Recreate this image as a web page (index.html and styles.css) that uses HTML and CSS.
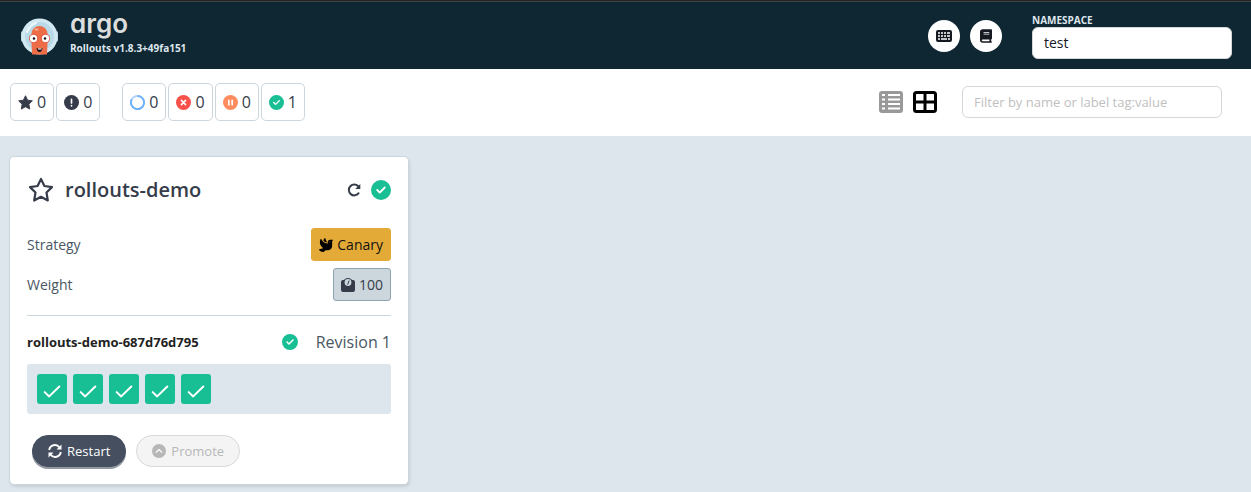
FILE: index.html
```html
<!DOCTYPE html>
<html lang="en">
<head>
    <meta charset="UTF-8">
    <meta name="viewport" content="width=device-width, initial-scale=1.0">
    <title>Argo Rollouts</title>
    <link rel="stylesheet" href="styles.css">
</head>
<body>
    <!-- Shared icons -->
    <svg class="sprite" aria-hidden="true">
        <symbol id="i-check" viewBox="0 0 512 512">
            <path d="M256 512A256 256 0 1 0 256 0a256 256 0 1 0 0 512zM369 209L241 337c-9.400 9.400-24.600 9.400-33.900 0l-64-64c-9.400-9.400-9.400-24.600 0-33.900s24.600-9.400 33.900 0l47 47L335 175c9.400-9.400 24.600-9.400 33.900 0s9.400 24.600 0 33.900z"/>
        </symbol>
        <symbol id="i-tick" viewBox="0 0 16 16">
            <path d="M1.500 9L5.500 12.800L14.500 4" fill="none" stroke="currentColor" stroke-width="1.800" stroke-linecap="round" stroke-linejoin="round"/>
        </symbol>
    </svg>

    <header class="header">
        <a href="#" class="brand">
            <svg class="brand-logo" viewBox="0 0 37 37" aria-hidden="true">
                <rect x="0" y="13" width="37" height="11" rx="2" fill="#b4d3e3"/>
                <circle cx="18.500" cy="18.500" r="18" fill="#d3e9f2"/>
                <circle cx="18.500" cy="18.500" r="14.500" fill="#b9dae8"/>
                <path d="M6 14Q9 7 15 5" fill="none" stroke="#eef8fc" stroke-width="2" stroke-linecap="round"/>
                <path d="M10.500 16a8 8 0 0 1 16 0v8c0 5-.5 8-.5 12.500H11c0-4.500-.5-7.500-.5-12.500z" fill="#ec6d47"/>
                <ellipse cx="15.500" cy="11.500" rx="2" ry="1.200" fill="#f7a78a"/>
                <circle cx="12.500" cy="20.500" r="4.500" fill="#e34e3b"/>
                <circle cx="24.500" cy="20.500" r="4.500" fill="#e34e3b"/>
                <circle cx="12.500" cy="20.500" r="3.700" fill="#fff"/>
                <circle cx="24.500" cy="20.500" r="3.700" fill="#fff"/>
                <circle cx="13" cy="20.500" r="1.200" fill="#111"/>
                <circle cx="24" cy="20.500" r="1.200" fill="#111"/>
                <path d="M15.500 30q3 1.500 6 0q-.5 4-3 4t-3-4z" fill="#1b1414"/>
                <path d="M17 30.500h3.500v1H17z" fill="#fff"/>
            </svg>
            <span class="brand-text">
                <span class="brand-name">argo</span>
                <span class="brand-version">Rollouts v1.8.3+49fa151</span>
            </span>
        </a>
        <div class="header-right">
            <button type="button" class="round-btn" aria-label="Keyboard shortcuts">
                <svg width="16" height="12" viewBox="0 0 16 12">
                    <rect width="16" height="12" rx="2" fill="#16191f"/>
                    <path d="M2 3h2M5 3h2M8 3h2M11 3h3M2 6h2M5 6h2M8 6h2M11 6h3M2 9h2M5 9h6M12 9h2" stroke="#fff" stroke-width="1.400"/>
                </svg>
            </button>
            <button type="button" class="round-btn" aria-label="Documentation">
                <svg width="12" height="14" viewBox="0 0 448 512">
                    <path fill="#16191f" d="M96 0C43 0 0 43 0 96V416c0 53 43 96 96 96H416c18 0 32-14 32-32s-14-32-32-32V384c18 0 32-14 32-32V32c0-18-14-32-32-32H96zm0 384H352v64H96c-18 0-32-14-32-32s14-32 32-32zm32-264c0-9 7-16 16-16H336c9 0 16 7 16 16s-7 16-16 16H144c-9 0-16-7-16-16zm16 48H336c9 0 16 7 16 16s-7 16-16 16H144c-9 0-16-7-16-16s7-16 16-16z"/>
                </svg>
            </button>
            <div class="namespace">
                <label for="namespace">NAMESPACE</label>
                <input type="text" id="namespace" class="text-input" value="test">
            </div>
        </div>
    </header>

    <div class="toolbar">
        <div class="filters">
            <div class="filter-group">
                <button type="button" class="filter-btn" aria-label="Favorites">
                    <svg class="filter-icon" viewBox="0 0 16 16"><path d="M8 .8L10.200 5.500L15.300 6.200L11.600 9.800L12.500 15L8 12.500L3.500 15L4.400 9.800L.7 6.200L5.800 5.500z" fill="#363c4a" stroke="#363c4a" stroke-linejoin="round"/></svg>
                    <span>0</span>
                </button>
                <button type="button" class="filter-btn" aria-label="Needs attention">
                    <svg class="filter-icon" viewBox="0 0 16 16"><circle cx="8" cy="8" r="8" fill="#363c4a"/><path d="M8 4.500v4M8 11.300v.2" stroke="#fff" stroke-width="1.800" stroke-linecap="round"/></svg>
                    <span>0</span>
                </button>
            </div>
            <div class="filter-group">
                <button type="button" class="filter-btn" aria-label="Progressing">
                    <svg class="filter-icon" viewBox="0 0 16 16"><circle cx="8" cy="8" r="7" fill="none" stroke="#b0d4fc" stroke-width="2"/><path d="M8 1A7 7 0 1 1 1.900 4.600" fill="none" stroke="#6cb0fa" stroke-width="2"/></svg>
                    <span>0</span>
                </button>
                <button type="button" class="filter-btn" aria-label="Degraded">
                    <svg class="filter-icon" viewBox="0 0 16 16"><circle cx="8" cy="8" r="8" fill="#f9504a"/><path d="M5.800 5.800l4.400 4.400M10.200 5.800l-4.400 4.400" stroke="#fff" stroke-width="1.700" stroke-linecap="round"/></svg>
                    <span>0</span>
                </button>
                <button type="button" class="filter-btn" aria-label="Paused">
                    <svg class="filter-icon" viewBox="0 0 16 16"><circle cx="8" cy="8" r="8" fill="#ff8c5e"/><path d="M6.200 5.700v4.600M9.800 5.700v4.600" stroke="#fff" stroke-width="1.800" stroke-linecap="round"/></svg>
                    <span>0</span>
                </button>
                <button type="button" class="filter-btn" aria-label="Healthy">
                    <svg class="filter-icon healthy"><use href="#i-check"/></svg>
                    <span>1</span>
                </button>
            </div>
        </div>
        <div class="view-tools">
            <button type="button" class="view-btn" aria-label="List view">
                <svg width="24" height="22" viewBox="0 0 24 22"><rect width="24" height="22" rx="3" fill="#999"/><path d="M3 4h3M9 4h12M3 8.500h3M9 8.500h12M3 13h3M9 13h12M3 17.500h3M9 17.500h12" stroke="#fff" stroke-width="2.200"/></svg>
            </button>
            <button type="button" class="view-btn" aria-label="Grid view">
                <svg width="24" height="22" viewBox="0 0 24 22"><rect x="1.500" y="1.500" width="21" height="19" rx="2" fill="none" stroke="#000" stroke-width="3"/><path d="M12 2v18M2 11h20" stroke="#000" stroke-width="3"/></svg>
            </button>
            <input type="text" class="text-input search" placeholder="Filter by name or label tag:value" aria-label="Filter rollouts">
        </div>
    </div>

    <main class="rollouts">
        <section class="card">
            <div class="card-header">
                <button type="button" class="icon-btn" aria-label="Add to favorites">
                    <svg width="27" height="26" viewBox="0 0 27 26"><path d="M14 2L17.400 9L25 10.100L19.500 15.500L20.800 23.500L14 19.800L7.200 23.500L8.500 15.500L3 10.100L10.600 9z" fill="none" stroke="#363c4a" stroke-width="2.200" stroke-linejoin="round"/></svg>
                </button>
                <h2>rollouts-demo</h2>
                <div class="card-status">
                    <svg width="14" height="14" viewBox="0 0 14 14"><path d="M11.600 10.200A5.400 5.400 0 1 1 11.200 3.300" fill="none" stroke="#363c4a" stroke-width="2" stroke-linecap="round"/><path d="M13.300 1v5H8.300z" fill="#363c4a"/></svg>
                    <svg class="healthy" width="20" height="20"><use href="#i-check"/></svg>
                </div>
            </div>

            <div class="info-row">
                <span>Strategy</span>
                <span class="tag tag-canary">
                    <svg width="14" height="14" viewBox="0 0 512 512"><path d="M288 167.200v-28.100c-28.200-36.300-47.100-79.300-54.100-125.200-2.100-13.500-19-18.800-27.800-8.300-21.100 24.900-37.700 54.100-48.900 86.500 34.200 38.300 80 64.600 130.800 75.100zM400 64c-44.200 0-80 35.900-80 80.100v59.400C215.600 197.300 127 133 87 41.800c-5.500-12.500-23.200-13.200-29-.9C41.400 76 32 115.200 32 156.600c0 70.800 34.100 136.900 85.100 185.900 13.200 12.700 26.100 23.200 38.900 32.800l-143.900 36C1.400 414-3.400 426.400 2.600 435.700 20 462.600 63 508.200 155.800 512c8 .3 16-2.600 22.100-7.900l65.200-56.100H320c88.400 0 160-71.500 160-159.900V128l32-64H400zm0 96.100c-8.800 0-16-7.200-16-16s7.200-16 16-16 16 7.200 16 16-7.200 16-16 16z"/></svg>
                    Canary
                </span>
            </div>
            <div class="info-row">
                <span>Weight</span>
                <span class="tag tag-weight">
                    <svg width="14" height="14" viewBox="0 0 14 14"><rect y="2" width="14" height="12" rx="2" fill="#363c4a"/><circle cx="7" cy="4.500" r="4.500" fill="#363c4a"/><circle cx="7" cy="4.500" r="3.400" fill="#ccd6dd"/><path d="M6.700 6.200L8 3" stroke="#363c4a" stroke-linecap="round"/></svg>
                    100
                </span>
            </div>

            <div class="revision">
                <span class="revision-name">rollouts-demo-687d76d795</span>
                <svg class="healthy" width="16" height="16"><use href="#i-check"/></svg>
                <span class="revision-number">Revision 1</span>
            </div>
            <div class="pods">
                <span class="pod"><svg width="18" height="18"><use href="#i-tick"/></svg></span>
                <span class="pod"><svg width="18" height="18"><use href="#i-tick"/></svg></span>
                <span class="pod"><svg width="18" height="18"><use href="#i-tick"/></svg></span>
                <span class="pod"><svg width="18" height="18"><use href="#i-tick"/></svg></span>
                <span class="pod"><svg width="18" height="18"><use href="#i-tick"/></svg></span>
            </div>

            <div class="actions">
                <button type="button" class="action-btn restart">
                    <svg width="14" height="14" viewBox="0 0 14 14"><path d="M1.200 6A5.700 5.700 0 0 1 11.500 3.500M12.800 8A5.700 5.700 0 0 1 2.500 10.500" fill="none" stroke="#fff" stroke-width="1.900"/><path d="M13.500 .5v5h-5zM.5 13.500v-5h5z" fill="#fff"/></svg>
                    Restart
                </button>
                <button type="button" class="action-btn promote" disabled>
                    <svg width="14" height="14" viewBox="0 0 14 14"><circle cx="7" cy="7" r="7" fill="#b7b7b7"/><path d="M4.200 8.200L7 5.500L9.800 8.200" fill="none" stroke="#f4f4f4" stroke-width="1.500" stroke-linecap="round" stroke-linejoin="round"/></svg>
                    Promote
                </button>
            </div>
        </section>
    </main>
</body>
</html>
```
FILE: styles.css
```css
* {
    box-sizing: border-box;
}
body {
    margin: 0;
    min-height: 100vh;
    background: #dee6ed;
    color: #363c4a;
    font-family: "Open Sans", "Noto Sans", sans-serif;
    font-size: 14px;
    line-height: 20px;
}
button, input {
    font: inherit;
    color: inherit;
}
button {
    display: flex;
    align-items: center;
    justify-content: center;
    padding: 0;
    border: none;
    background: none;
    cursor: pointer;
}
svg {
    display: block;
    flex: none;
}
.sprite {
    display: none;
}
.healthy {
    fill: #18be94;
}

/* Header */
.header {
    display: flex;
    align-items: center;
    justify-content: space-between;
    height: 69px;
    padding: 2px 19px 0 21px;
    background: #0f2733;
    border-top: 1px solid #242424;
    box-shadow: inset 0 1px #3c4246;
}
.brand {
    display: flex;
    align-items: center;
    gap: 12px;
    color: #dee6ed;
    text-decoration: none;
}
.brand-logo {
    width: 37px;
    height: 37px;
}
.brand-text {
    display: flex;
    flex-direction: column;
    gap: 2px;
    padding-bottom: 10px;
}
/* cv11 is Inter's single-storey a */
.brand-name {
    font-family: Inter, sans-serif;
    font-feature-settings: "cv11";
    font-size: 26px;
    font-weight: 600;
    line-height: 32px;
    color: #dcdedd;
}
.brand-version {
    font-size: 10px;
    font-weight: 700;
    line-height: 12px;
}
.header-right {
    display: flex;
    align-items: center;
    gap: 10px;
}
.round-btn {
    width: 32px;
    height: 32px;
    border-radius: 50%;
    background: #fff;
}
.namespace {
    display: flex;
    flex-direction: column;
    width: 200px;
    margin-left: 20px;
}
.namespace label {
    font-size: 10px;
    font-weight: 700;
    line-height: 13px;
    color: #dee6ed;
}
.text-input {
    width: 100%;
    height: 32px;
    padding: 0 11px;
    border: 1px solid #d5d8da;
    border-radius: 6px;
    background: #fff;
    color: #16191f;
}
.text-input::placeholder {
    color: #bfbfbf;
}

/* Toolbar */
.toolbar {
    display: flex;
    align-items: center;
    justify-content: space-between;
    padding: 14px 29px 15px 10px;
    background: #fff;
}
.filters {
    display: flex;
    gap: 22px;
}
.filter-group {
    display: flex;
    gap: 2px;
}
.filter-btn {
    gap: 4px;
    height: 38px;
    padding: 0 7px;
    border: 1px solid #ccd6dd;
    border-radius: 5px;
    font-size: 16px;
}
.filter-icon {
    width: 15px;
    height: 15px;
}
.view-tools {
    display: flex;
    align-items: center;
    gap: 10px;
}
.search {
    width: 260px;
    margin-left: 15px;
    font-size: 13px;
}

/* Rollout card */
.rollouts {
    padding: 20px 9px 7px;
}
.card {
    width: 400px;
    padding: 17px;
    border: 1px solid #ccd6dd;
    border-radius: 5px;
    background: #fff;
    box-shadow: 1px 2px 3px rgba(0, 0, 0, 0.1);
}
.card-header {
    display: flex;
    align-items: center;
    gap: 11px;
    height: 31px;
    margin-bottom: 20px;
}
.card-header h2 {
    margin: 0;
    font-size: 20px;
    font-weight: 600;
    line-height: 28px;
}
.card-status {
    display: flex;
    align-items: center;
    gap: 10px;
    margin-left: auto;
}
.info-row {
    display: flex;
    align-items: center;
    justify-content: space-between;
    padding: 3px 0 4px;
    color: #495763;
}
.tag {
    display: flex;
    align-items: center;
    gap: 4px;
    height: 33px;
    padding: 0 7px;
    border: 1px solid;
    border-radius: 3px;
}
.tag-canary {
    background: #e3aa37;
    border-color: #e3aa37;
    color: #111;
}
.tag-weight {
    background: #ccd6dd;
    border-color: #8fa4b1;
    color: #363c4a;
}
.revision {
    display: flex;
    align-items: center;
    margin-top: 10px;
    padding: 14px 0 10px;
    border-top: 1px solid #ccd6dd;
}
.revision-name {
    margin-right: auto;
    font-size: 13px;
    font-weight: 700;
    line-height: 24px;
    color: #222;
}
.revision-number {
    margin-left: 18px;
    font-size: 16px;
    line-height: 24px;
    color: #495763;
}
.pods {
    display: flex;
    gap: 6px;
    padding: 10px;
    border-radius: 3px;
    background: #dee6ed;
}
.pod {
    display: flex;
    align-items: center;
    justify-content: center;
    width: 30px;
    height: 30px;
    padding-top: 3px;
    border-radius: 3px;
    background: #18be94;
    color: #fff;
}
.actions {
    display: flex;
    gap: 10px;
    padding: 21px 5px 0;
}
.action-btn {
    gap: 5px;
    height: 32px;
    padding: 0 15px;
    border: 1px solid #d9d9d9;
    border-radius: 16px;
    font-size: 13px;
}
.restart {
    border-color: #454f60;
    background: #454f60;
    color: #fff;
    box-shadow: 0 2px #9299a1;
}
.promote {
    background: #f4f4f4;
    color: #b7b7b7;
    cursor: default;
}
```
